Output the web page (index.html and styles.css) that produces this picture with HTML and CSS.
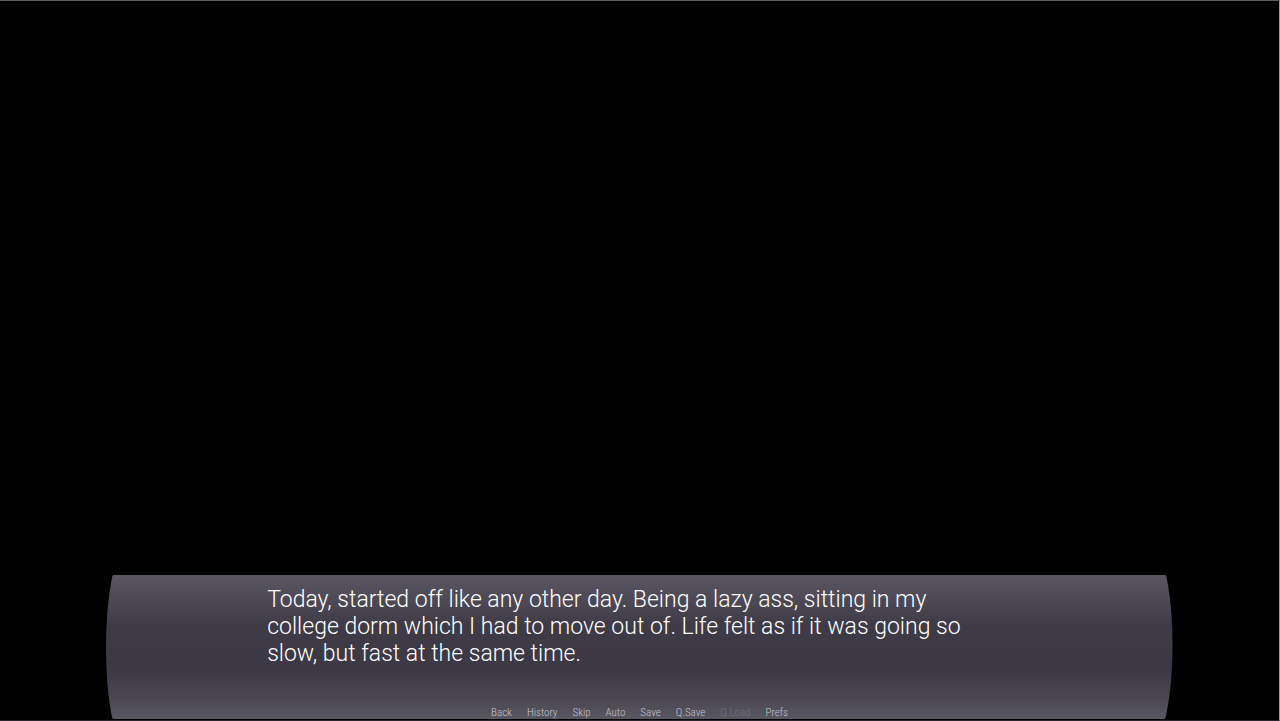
FILE: index.html
```
<!DOCTYPE html>
<html lang="en">
<head>
  <meta charset="UTF-8" />
  <meta name="viewport" content="width=device-width, initial-scale=1.0" />
  <title>Visual Novel</title>
  <link rel="stylesheet" href="styles.css">
</head>
<body>
  <main class="scene">
    <section class="textbox">
      <svg class="textbox-bg" viewBox="0 0 1067 144" preserveAspectRatio="none" aria-hidden="true">
        <defs>
          <linearGradient id="panel" x1="0" y1="0" x2="0" y2="1">
            <stop offset="0" stop-color="#595661" />
            <stop offset="0.16" stop-color="#4e4a56" />
            <stop offset="0.35" stop-color="#3e3a46" />
            <stop offset="0.66" stop-color="#3c3844" />
            <stop offset="0.84" stop-color="#494650" />
            <stop offset="1" stop-color="#595761" />
          </linearGradient>
        </defs>
        <path fill="url(#panel)" d="M8 0H1059Q1061 0 1061 3C1069 43 1069 101 1060 142Q1059 144 1058 144H8Q6 144 6 142C-2 101 -2 43 6 3Q6 0 8 0Z" />
      </svg>
      <p class="dialogue">
        Today, started off like any other day. Being a lazy ass, sitting in my<br>
        college dorm which I had to move out of. Life felt as if it was going so<br>
        slow, but fast at the same time.
      </p>
      <nav class="quick-menu">
        <button type="button">Back</button>
        <button type="button">History</button>
        <button type="button">Skip</button>
        <button type="button">Auto</button>
        <button type="button">Save</button>
        <button type="button">Q.Save</button>
        <button type="button" disabled>Q.Load</button>
        <button type="button">Prefs</button>
      </nav>
    </section>
  </main>
</body>
</html>
```
FILE: styles.css
```
* {
  box-sizing: border-box;
}

body {
  margin: 0;
  background: #000;
  color: #fff;
  font-family: Roboto, sans-serif;
}

/* window edge shows along the top, right and bottom */
.scene {
  min-height: 100vh;
  display: flex;
  flex-direction: column;
  justify-content: flex-end;
  align-items: center;
  border-top: 1px solid #5c5c5c;
  border-right: 1px solid #999;
  border-bottom: 1px solid #29242c;
}

.textbox {
  position: relative;
  width: 83.4%;
  min-height: 145px;
  padding: 11px 161px 0;
  display: flex;
  flex-direction: column;
  justify-content: space-between;
}

.textbox-bg {
  position: absolute;
  top: 0;
  left: 0;
  width: 100%;
  height: 144px;
}

.dialogue {
  position: relative;
  margin: 0;
  font-size: 23px;
  font-weight: 300;
  line-height: 27px;
  white-space: nowrap;
}

.quick-menu {
  position: relative;
  display: flex;
  justify-content: center;
  gap: 15px;
}

.quick-menu button {
  padding: 0;
  border: none;
  background: none;
  color: #c8c5cc;
  font-family: "Roboto Condensed", Roboto, sans-serif;
  font-size: 11px;
  font-weight: 300;
  line-height: 14px;
  cursor: pointer;
}

.quick-menu button:hover {
  color: #fff;
}

.quick-menu button:disabled {
  color: #76737e;
  cursor: default;
}
```
